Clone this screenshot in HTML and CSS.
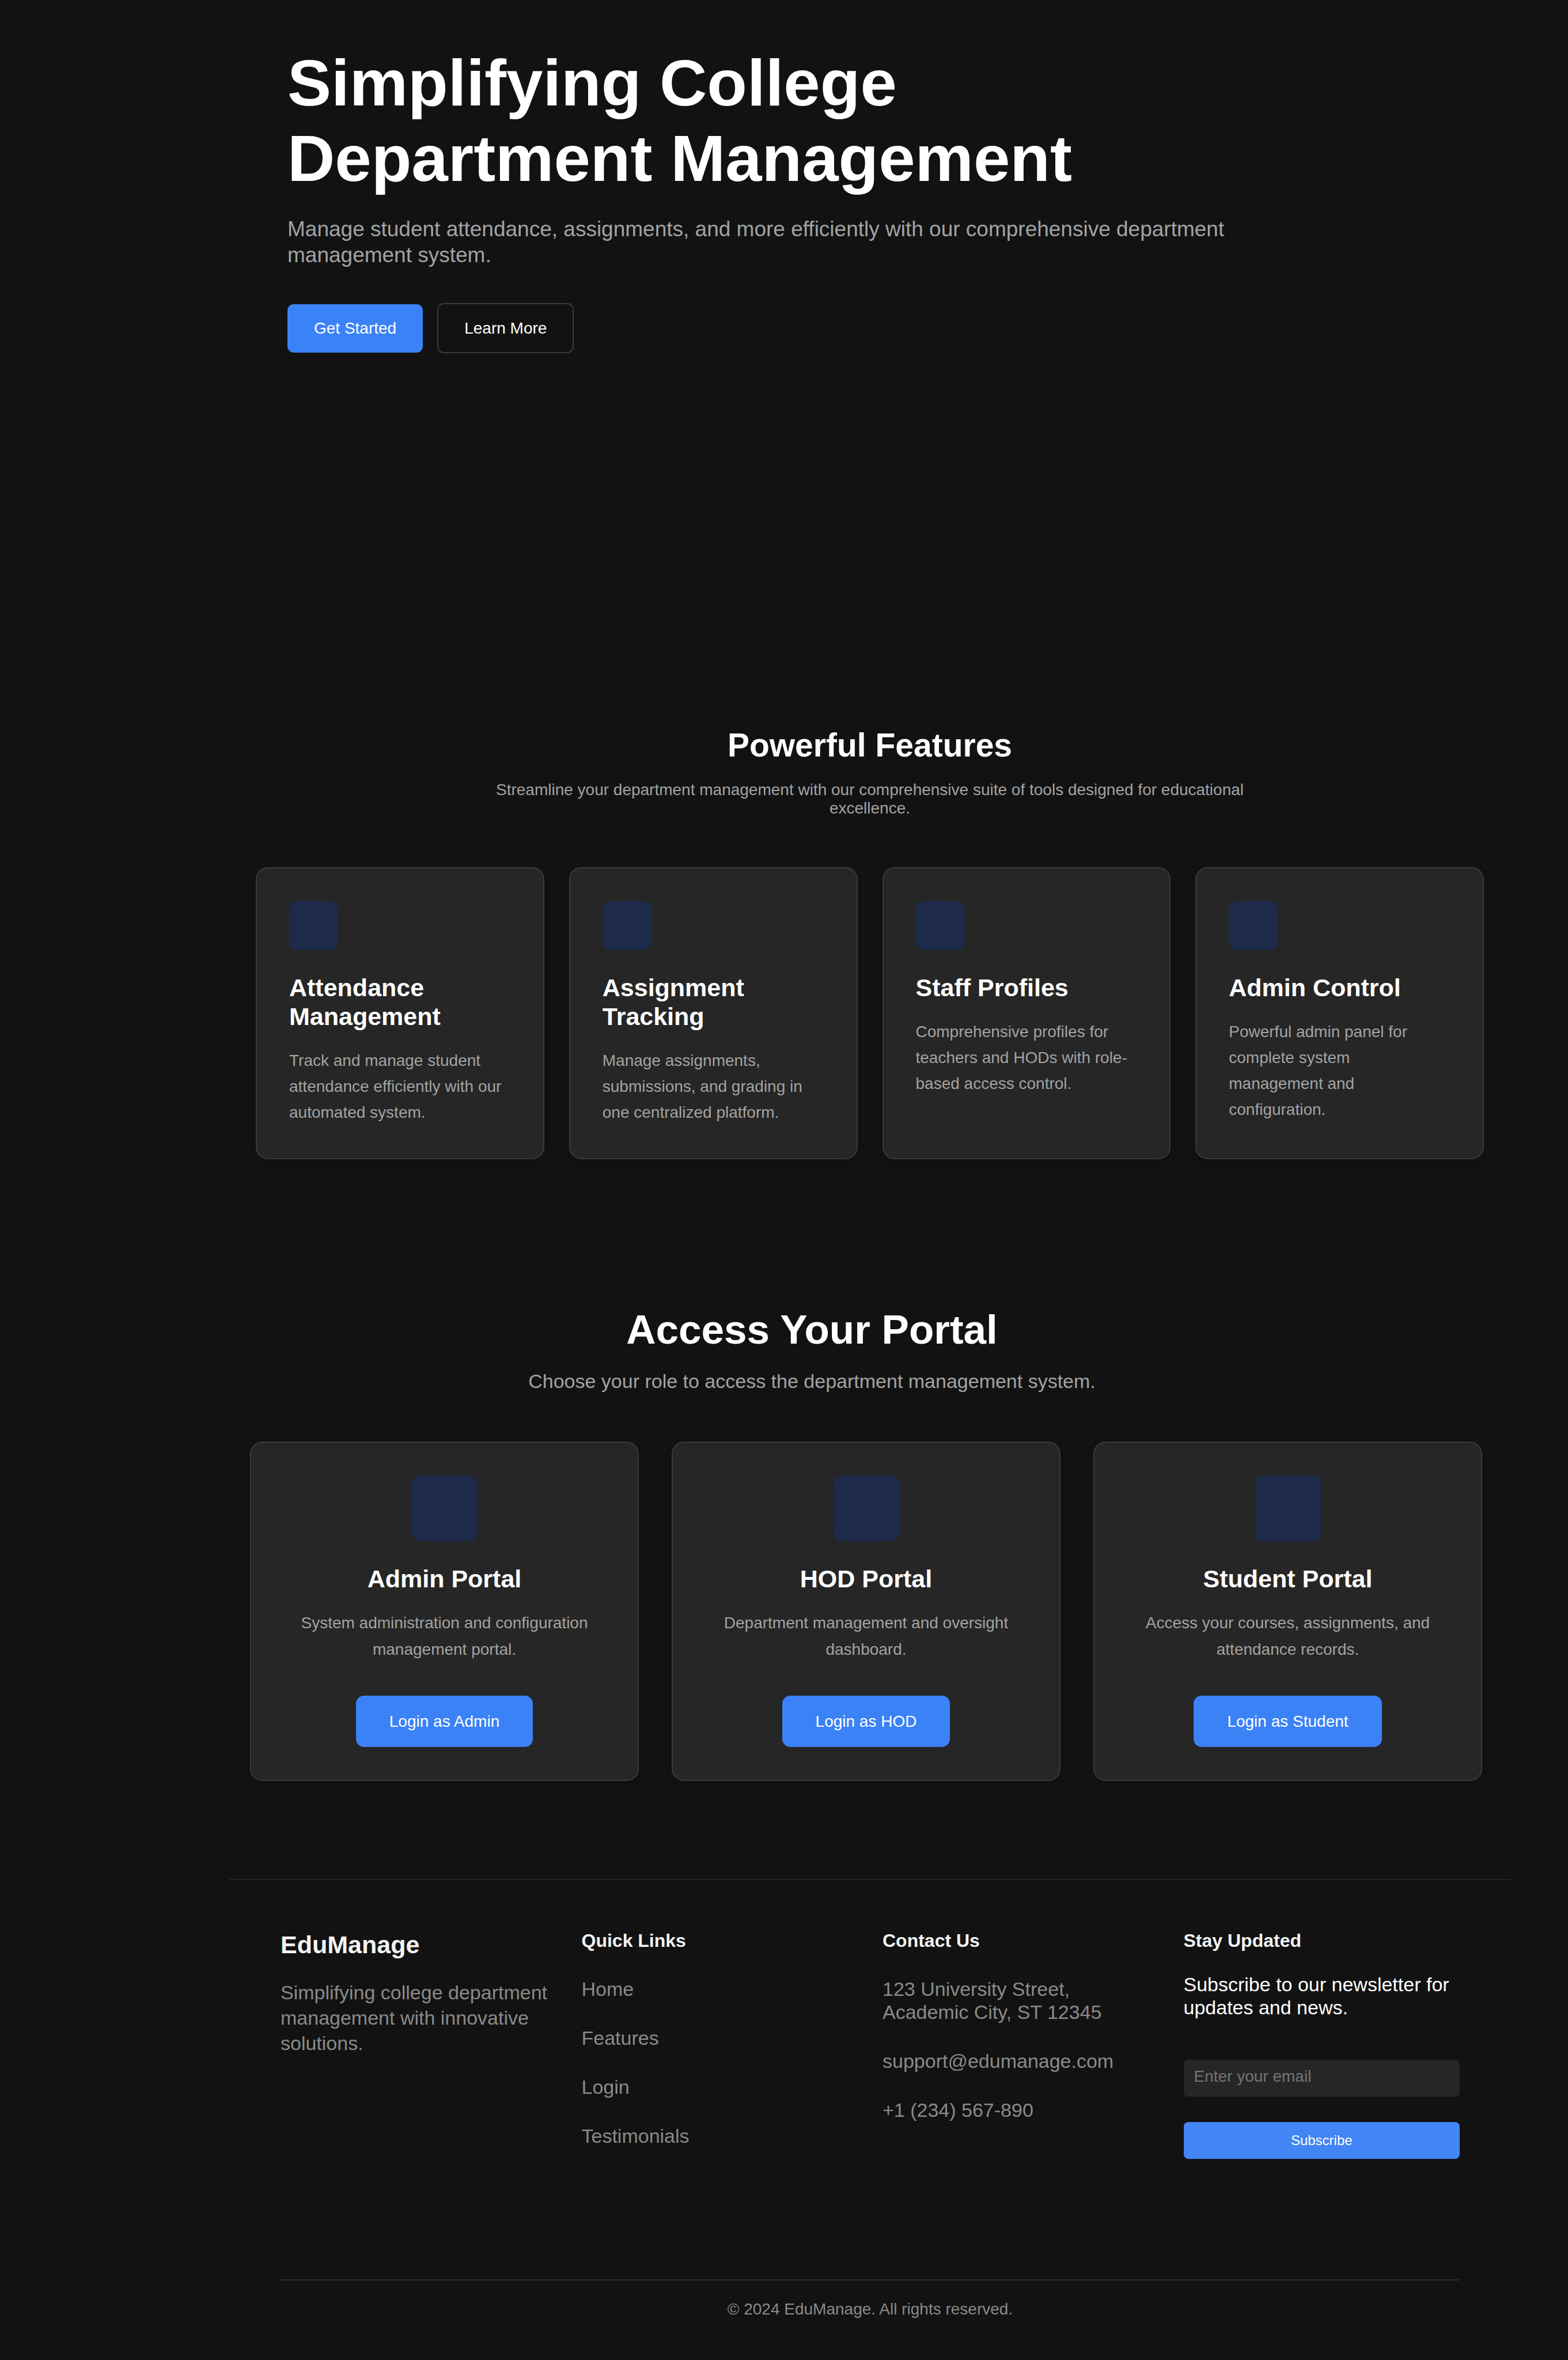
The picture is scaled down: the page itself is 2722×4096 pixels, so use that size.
FILE: index.html
```html
<!DOCTYPE html>
<html lang="en">
<head>
  <meta charset="utf-8">
  <meta name="viewport" content="width=device-width, initial-scale=1">
  <title>EduManage</title>
  <link rel="stylesheet" href="styles.css">
</head>
<body>
  <div class="page">
    <main>
      <section class="hero">
        <h1 class="hero-title">Simplifying College Department Management</h1>
        <p class="hero-text">Manage student attendance, assignments, and more efficiently with our comprehensive department management system.</p>
        <div class="hero-actions">
          <button type="button" class="btn">Get Started</button>
          <button type="button" class="btn btn-outline">Learn More</button>
        </div>
      </section>

      <section class="features" id="features">
        <h2 class="features-title">Powerful Features</h2>
        <p class="features-text">Streamline your department management with our comprehensive suite of tools designed for educational excellence.</p>
        <div class="features-grid">
          <article class="card">
            <div class="card-icon"></div>
            <h3 class="card-title">Attendance Management</h3>
            <p class="card-text">Track and manage student attendance efficiently with our automated system.</p>
          </article>
          <article class="card">
            <div class="card-icon"></div>
            <h3 class="card-title">Assignment Tracking</h3>
            <p class="card-text">Manage assignments, submissions, and grading in one centralized platform.</p>
          </article>
          <article class="card">
            <div class="card-icon"></div>
            <h3 class="card-title">Staff Profiles</h3>
            <p class="card-text">Comprehensive profiles for teachers and HODs with role-based access control.</p>
          </article>
          <article class="card">
            <div class="card-icon"></div>
            <h3 class="card-title">Admin Control</h3>
            <p class="card-text">Powerful admin panel for complete system management and configuration.</p>
          </article>
        </div>
      </section>

      <section class="portals" id="login">
        <div class="portals-intro">
          <h2 class="portals-title">Access Your Portal</h2>
          <p class="portals-text">Choose your role to access the department management system.</p>
        </div>
        <div class="portals-grid">
          <article class="card card-portal">
            <div class="card-icon card-icon-large"></div>
            <h3 class="card-title">Admin Portal</h3>
            <p class="card-text">System administration and configuration management portal.</p>
            <button type="button" class="btn btn-login">Login as Admin</button>
          </article>
          <article class="card card-portal">
            <div class="card-icon card-icon-large"></div>
            <h3 class="card-title">HOD Portal</h3>
            <p class="card-text">Department management and oversight dashboard.</p>
            <button type="button" class="btn btn-login">Login as HOD</button>
          </article>
          <article class="card card-portal">
            <div class="card-icon card-icon-large"></div>
            <h3 class="card-title">Student Portal</h3>
            <p class="card-text">Access your courses, assignments, and attendance records.</p>
            <button type="button" class="btn btn-login">Login as Student</button>
          </article>
        </div>
      </section>
    </main>

    <footer class="footer">
      <div class="footer-grid">
        <section>
          <h3 class="footer-brand">EduManage</h3>
          <p class="footer-about">Simplifying college department management with innovative solutions.</p>
        </section>
        <section>
          <h4 class="footer-title">Quick Links</h4>
          <ul class="footer-list">
            <li><a href="#">Home</a></li>
            <li><a href="#features">Features</a></li>
            <li><a href="#login">Login</a></li>
            <li><a href="#testimonials">Testimonials</a></li>
          </ul>
        </section>
        <section>
          <h4 class="footer-title">Contact Us</h4>
          <ul class="footer-list">
            <li>123 University Street,<br>Academic City, ST 12345</li>
            <li>support@edumanage.com</li>
            <li>+1 (234) 567-890</li>
          </ul>
        </section>
        <section>
          <h4 class="footer-title">Stay Updated</h4>
          <p class="newsletter-text">Subscribe to our newsletter for updates and news.</p>
          <form class="newsletter">
            <input type="email" class="newsletter-input" placeholder="Enter your email" aria-label="Enter your email">
            <button type="submit" class="newsletter-button">Subscribe</button>
          </form>
        </section>
      </div>
      <p class="copyright">© 2024 EduManage. All rights reserved.</p>
    </footer>
  </div>
</body>
</html>
```
FILE: styles.css
```css
:root {
  --bg: #121212;
  --surface: #262626;
  --border: #3a3a3a;
  --accent: #3b82f6;
  --icon: #1e2a4a;
  --text: #ffffff;
  --muted: #a3a3a3;
  --faint: #8a8a8a;
}

* {
  box-sizing: border-box;
}

body {
  margin: 0;
  background: var(--bg);
  color: var(--text);
  font-family: "Liberation Sans", Arial, Helvetica, sans-serif;
}

h1, h2, h3, h4, p, ul {
  margin: 0;
  padding: 0;
}

button, input {
  font-family: inherit;
}

.page {
  margin-left: 398px;
  margin-right: 100px;
}

/* Hero */

.hero {
  padding: 78px 101px 0;
  min-height: 1173px;
}

.hero-title {
  max-width: 1700px;
  font-size: 114px;
  line-height: 131px;
}

.hero-text {
  max-width: 1700px;
  margin-top: 35px;
  color: var(--muted);
  font-size: 37px;
  line-height: 45px;
}

.hero-actions {
  display: flex;
  align-items: center;
  gap: 25px;
  margin-top: 61px;
}

.btn {
  height: 84px;
  padding: 0 46px;
  border: 0;
  border-radius: 11px;
  background: var(--accent);
  color: var(--text);
  font-size: 28px;
  line-height: 32px;
  cursor: pointer;
}

.btn-outline {
  height: 87px;
  padding: 0 45px;
  border: 2px solid var(--border);
  background: transparent;
}

.btn-login {
  height: 89px;
  margin-top: 57px;
  padding: 0 58px;
  border-radius: 14px;
}

/* Cards */

.card {
  padding: 57px 61px 57px 56px;
  border: 2px solid var(--border);
  border-radius: 21px;
  background: var(--surface);
  box-shadow: 0 7px 11px rgba(0, 0, 0, 0.1);
}

.card-icon {
  width: 85px;
  height: 85px;
  border-radius: 14px;
  background: var(--icon);
}

.card-icon-large {
  width: 114px;
  height: 114px;
}

.card-title {
  margin-top: 40px;
  font-size: 43px;
  line-height: 50px;
}

.card-text {
  margin-top: 29px;
  color: var(--muted);
  font-size: 28px;
  line-height: 45px;
}

.card-portal {
  display: flex;
  flex-direction: column;
  align-items: center;
  padding: 57px;
  text-align: center;
}

.card-portal .card-text {
  line-height: 46px;
}

/* Features */

.features {
  padding: 87px 46px 0;
  text-align: center;
}

.features-title {
  font-size: 57px;
  line-height: 66px;
}

.features-text {
  max-width: 1400px;
  margin: 29px auto 0;
  color: var(--muted);
  font-size: 28px;
  line-height: 32px;
}

.features-grid {
  display: grid;
  grid-template-columns: repeat(4, 1fr);
  gap: 43px;
  margin-top: 86px;
  text-align: left;
}

/* Portals */

.portals {
  padding: 255px 49px 170px 36px;
}

.portals-intro {
  margin-right: 188px;
  text-align: center;
}

.portals-title {
  font-size: 71px;
  line-height: 82px;
}

.portals-text {
  margin-top: 28px;
  color: var(--muted);
  font-size: 34px;
  line-height: 40px;
}

.portals-grid {
  display: grid;
  grid-template-columns: repeat(3, 1fr);
  gap: 57px;
  margin-top: 85px;
}

/* Footer */

.footer {
  padding: 87px 88px 72px 89px;
  border-top: 2px solid #242424;
}

.footer-grid {
  display: grid;
  grid-template-columns: repeat(4, 1fr);
  gap: 43px;
}

.footer-brand {
  color: #f3f3f3;
  font-size: 43px;
  line-height: 50px;
}

.footer-about {
  margin-top: 36px;
  color: var(--faint);
  font-size: 34px;
  line-height: 44px;
}

.footer-title {
  color: #f3f3f3;
  font-size: 32px;
  line-height: 37px;
}

.footer-list {
  display: flex;
  flex-direction: column;
  gap: 45px;
  margin-top: 45px;
  color: var(--faint);
  font-size: 34px;
  line-height: 40px;
  list-style: none;
}

.footer-list a {
  color: inherit;
  text-decoration: none;
}

.newsletter-text {
  margin-top: 37px;
  font-size: 34px;
  line-height: 40px;
}

.newsletter {
  display: flex;
  flex-direction: column;
  gap: 44px;
  margin-top: 71px;
}

.newsletter-input {
  width: 100%;
  height: 64px;
  padding: 0 18px 6px;
  border: 0;
  border-radius: 8px;
  background: var(--surface);
  color: var(--text);
  font-size: 28px;
}

.newsletter-input::placeholder {
  color: #757575;
}

.newsletter-button {
  height: 64px;
  padding: 0;
  border: 0;
  border-radius: 8px;
  background: #4285f4;
  color: var(--text);
  font-size: 24px;
  cursor: pointer;
}

.copyright {
  margin-top: 209px;
  padding-top: 34px;
  border-top: 2px solid #2c2c2c;
  color: var(--faint);
  font-size: 28px;
  line-height: 32px;
  text-align: center;
}
```
